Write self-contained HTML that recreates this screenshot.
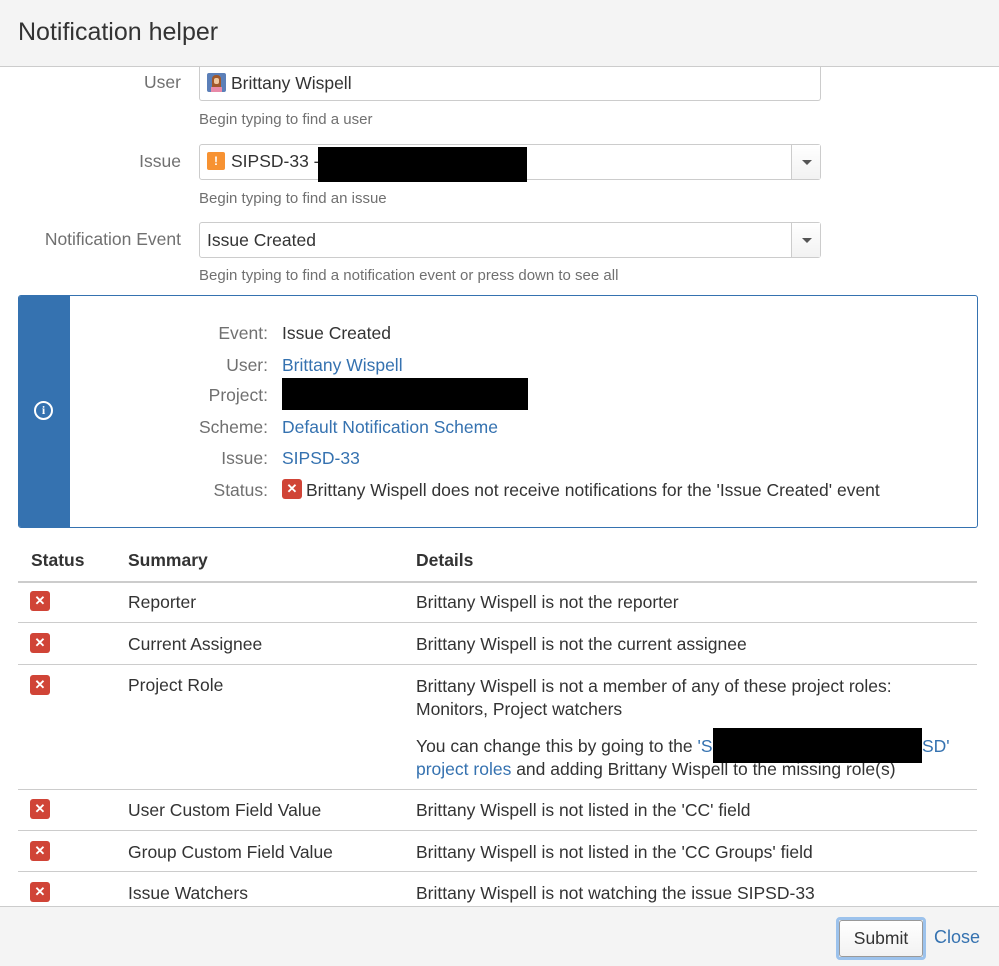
<!DOCTYPE html>
<html><head><style>
*{box-sizing:border-box;margin:0;padding:0}
body{width:999px;height:966px;position:relative;overflow:hidden;background:#fff;font-family:"Liberation Sans",Arial,sans-serif;color:#333;font-size:17.5px}
.a{position:absolute;white-space:nowrap}
.lbl{color:#707070;text-align:right;width:181px;left:0}
.help{color:#707070;font-size:15px;left:199px}
.inp{position:absolute;left:199px;width:622px;border:1px solid #ccc;border-radius:3px;background:#fff}
.dd{position:absolute;right:0;top:0;bottom:0;width:29px;border-left:1px solid #ccc;background:linear-gradient(#fff,#f2f2f2)}
.dd:after{content:"";position:absolute;left:10px;top:15px;border:5px solid transparent;border-top:5px solid #555;border-bottom:0}
.ik{color:#707070;text-align:right;width:268px;left:0}
.iv{left:282px}
.blue{color:#3572b0}
.x{position:absolute;width:20px;height:20px;background:#d04437;border-radius:3px;color:#fff;font-size:13px;font-weight:bold;text-align:center;line-height:20px}
.hr{position:absolute;left:18px;width:959px;height:1px;background:#ccc}
.blk{position:absolute;background:#000}
</style></head><body>
<div class="a" style="left:0;top:0;width:999px;height:67px;background:#f4f4f4;border-bottom:1px solid #ccc"></div>
<div class="a" style="left:18px;top:18px;font-size:25px;color:#333">Notification helper</div>

<div class="inp" style="top:67px;height:34px;border-top:none;border-radius:0 0 3px 3px"></div>
<div class="a" style="left:207px;top:73px;width:19px;height:19px;background:#5b7fb8;border-radius:2px"><div style="position:absolute;left:5px;top:2px;width:9px;height:14px;background:#a0582a;border-radius:4px 4px 0 0"></div><div style="position:absolute;left:7px;top:5px;width:5px;height:6px;background:#f0c8a0;border-radius:2px"></div><div style="position:absolute;left:4px;top:14px;width:11px;height:5px;background:#e88aa8"></div></div>
<div class="a" style="left:231px;top:73px">Brittany Wispell</div>
<div class="a lbl" style="top:72px">User</div>
<div class="a help" style="top:111px">Begin typing to find a user</div>

<div class="inp" style="top:144px;height:36px"><div class="dd"></div></div>
<div class="a" style="left:207px;top:152px;width:18px;height:18px;background:#f79232;border-radius:2px;color:#fff;font-size:12px;font-weight:bold;text-align:center;line-height:18px">!</div>
<div class="a" style="left:231px;top:151px">SIPSD-33 -</div>
<div class="blk" style="left:318px;top:147px;width:209px;height:35px"></div>
<div class="a lbl" style="top:151px">Issue</div>
<div class="a help" style="top:190px">Begin typing to find an issue</div>

<div class="inp" style="top:222px;height:36px"><div class="dd"></div></div>
<div class="a" style="left:207px;top:230px">Issue Created</div>
<div class="a lbl" style="top:229px">Notification Event</div>
<div class="a help" style="top:267px">Begin typing to find a notification event or press down to see all</div>

<div class="a" style="left:18px;top:295px;width:960px;height:233px;border:1px solid #3572b0;border-radius:3px;overflow:hidden"><div style="position:absolute;left:0;top:0;bottom:0;width:51px;background:#3572b0"></div></div>
<div class="a" style="left:34px;top:401px;width:19px;height:19px;border:2px solid #fff;border-radius:50%;color:#fff;font-size:12px;font-weight:bold;text-align:center;line-height:15px;font-family:'Liberation Serif',serif">i</div>
<div class="a ik" style="top:323px">Event:</div><div class="a iv" style="top:323px">Issue Created</div>
<div class="a ik" style="top:355px">User:</div><div class="a iv blue" style="top:355px">Brittany Wispell</div>
<div class="a ik" style="top:385px">Project:</div><div class="blk" style="left:282px;top:378px;width:246px;height:32px"></div>
<div class="a ik" style="top:417px">Scheme:</div><div class="a iv blue" style="top:417px">Default Notification Scheme</div>
<div class="a ik" style="top:448px">Issue:</div><div class="a iv blue" style="top:448px">SIPSD-33</div>
<div class="a ik" style="top:480px">Status:</div><div class="x" style="left:282px;top:479px">✕</div><div class="a" style="left:306px;top:480px">Brittany Wispell does not receive notifications for the 'Issue Created' event</div>

<div class="a" style="left:31px;top:550px;font-weight:bold">Status</div>
<div class="a" style="left:128px;top:550px;font-weight:bold">Summary</div>
<div class="a" style="left:416px;top:550px;font-weight:bold">Details</div>
<div class="hr" style="top:581px;height:2px"></div>

<div class="x" style="left:30px;top:591px">✕</div><div class="a" style="left:128px;top:592px">Reporter</div><div class="a" style="left:416px;top:592px">Brittany Wispell is not the reporter</div>
<div class="hr" style="top:622px"></div>
<div class="x" style="left:30px;top:633px">✕</div><div class="a" style="left:128px;top:634px">Current Assignee</div><div class="a" style="left:416px;top:634px">Brittany Wispell is not the current assignee</div>
<div class="hr" style="top:664px"></div>
<div class="x" style="left:30px;top:675px">✕</div><div class="a" style="left:128px;top:675px">Project Role</div>
<div class="a" style="left:416px;top:675px;line-height:23px">Brittany Wispell is not a member of any of these project roles:<br>Monitors, Project watchers</div>
<div class="a" style="left:416px;top:735px;line-height:23px">You can change this by going to the <span class="blue">'S</span><br><span class="blue">project roles</span> and adding Brittany Wispell to the missing role(s)</div>
<div class="a blue" style="left:922px;top:735px;line-height:23px">SD'</div>
<div class="blk" style="left:713px;top:728px;width:209px;height:35px"></div>
<div class="hr" style="top:789px"></div>
<div class="x" style="left:30px;top:799px">✕</div><div class="a" style="left:128px;top:800px">User Custom Field Value</div><div class="a" style="left:416px;top:800px">Brittany Wispell is not listed in the 'CC' field</div>
<div class="hr" style="top:830px"></div>
<div class="x" style="left:30px;top:841px">✕</div><div class="a" style="left:128px;top:842px">Group Custom Field Value</div><div class="a" style="left:416px;top:842px">Brittany Wispell is not listed in the 'CC Groups' field</div>
<div class="hr" style="top:871px"></div>
<div class="x" style="left:30px;top:882px">✕</div><div class="a" style="left:128px;top:883px">Issue Watchers</div><div class="a" style="left:416px;top:883px">Brittany Wispell is not watching the issue SIPSD-33</div>

<div class="a" style="left:0;top:906px;width:999px;height:60px;background:#f4f4f4;border-top:1px solid #ccc"></div>
<div class="a" style="left:836px;top:917px;width:90px;height:43px;border:3px solid #9cc2ec;border-radius:4px"></div>
<div class="a" style="left:839px;top:920px;width:84px;height:37px;border:1px solid #999;border-radius:3px;background:linear-gradient(#fff,#f2f2f2);text-align:center;line-height:35px;color:#333">Submit</div>
<div class="a blue" style="left:934px;top:927px;font-size:18px">Close</div>
</body></html>
